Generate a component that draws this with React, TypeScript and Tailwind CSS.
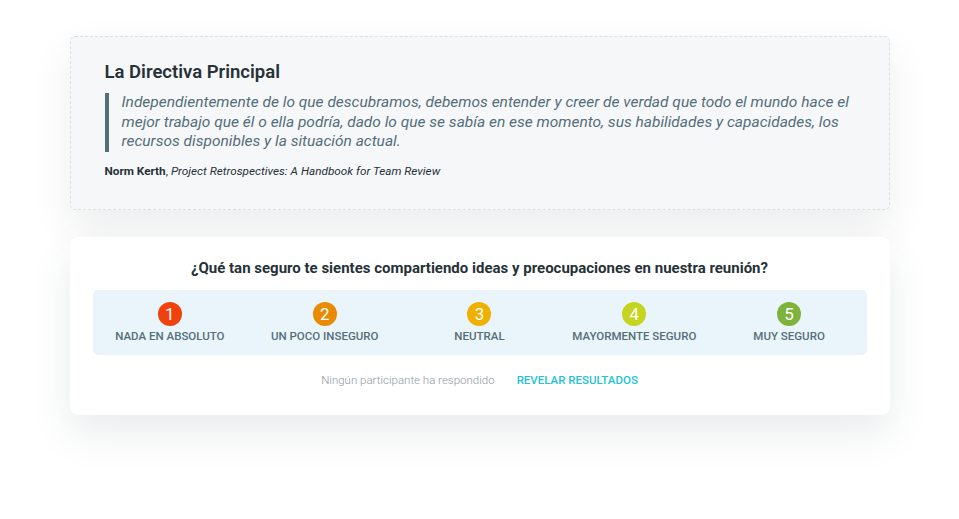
import React from 'react';

const options = [
    { n: 1, label: 'Nada en absoluto', color: 'bg-[#f1410d]' },
    { n: 2, label: 'Un poco inseguro', color: 'bg-[#e98a02]' },
    { n: 3, label: 'Neutral', color: 'bg-[#f0b000]' },
    { n: 4, label: 'Mayormente seguro', color: 'bg-[#c5d41f]' },
    { n: 5, label: 'Muy seguro', color: 'bg-[#7db33a]' },
];

export default function App() {
    return (
        <div className="min-h-[519px] bg-white pt-[36px] font-['Roboto',sans-serif]">
            <div className="mx-auto w-[820px] flex flex-col gap-[27px]">
                <div className="h-[174px] rounded-[5px] border border-dashed border-[#dde0e3] bg-[#f5f7f9] px-[34px] pt-[23px] shadow-[0_18px_40px_rgba(40,55,70,0.09)]">
                    <h2 className="text-[18.5px] leading-[24px] font-semibold text-[#263238]">La Directiva Principal</h2>
                    <blockquote className="mt-[9px] border-l-4 border-[#546e7a] pl-[13px] text-[15.5px] leading-[19.5px] italic text-[#546e7a]">
                        Independientemente de lo que descubramos, debemos entender y creer de verdad que todo el mundo hace el mejor trabajo que él o ella podría, dado lo que se sabía en ese momento, sus habilidades y capacidades, los recursos disponibles y la situación actual.
                    </blockquote>
                    <p className="mt-[11px] text-[11.75px] leading-[16px] text-[#263238]">
                        <span className="font-bold">Norm Kerth</span>, <span className="italic">Project Retrospectives: A Handbook for Team Review</span>
                    </p>
                </div>

                <div className="rounded-[8px] bg-white px-[23px] pt-[21px] pb-[27px] shadow-[0_18px_40px_rgba(40,55,70,0.10)]">
                    <h3 className="text-center text-[15px] leading-[20px] font-bold text-[#263238]">
                        ¿Qué tan seguro te sientes compartiendo ideas y preocupaciones en nuestra reunión?
                    </h3>
                    <div className="mt-[12px] grid grid-cols-5 rounded-[5px] bg-[#eaf5fb] py-[12px]">
                        {options.map((o) => (
                            <div key={o.n} className="flex flex-col items-center gap-[3px]">
                                <div className={`flex h-[24px] w-[24px] items-center justify-center rounded-full ${o.color} text-[17px] leading-none text-white`}>
                                    {o.n}
                                </div>
                                <span className="text-[11.5px] leading-[14px] font-medium uppercase text-[#546e7a]">{o.label}</span>
                            </div>
                        ))}
                    </div>
                    <div className="mt-[17px] flex items-center justify-center gap-[22px] text-[11.5px] leading-[16px]">
                        <span className="font-light text-[#8a9aa3]">Ningún participante ha respondido</span>
                        <button className="font-medium uppercase text-[#26c1d9]">Revelar resultados</button>
                    </div>
                </div>
            </div>
        </div>
    );
}
